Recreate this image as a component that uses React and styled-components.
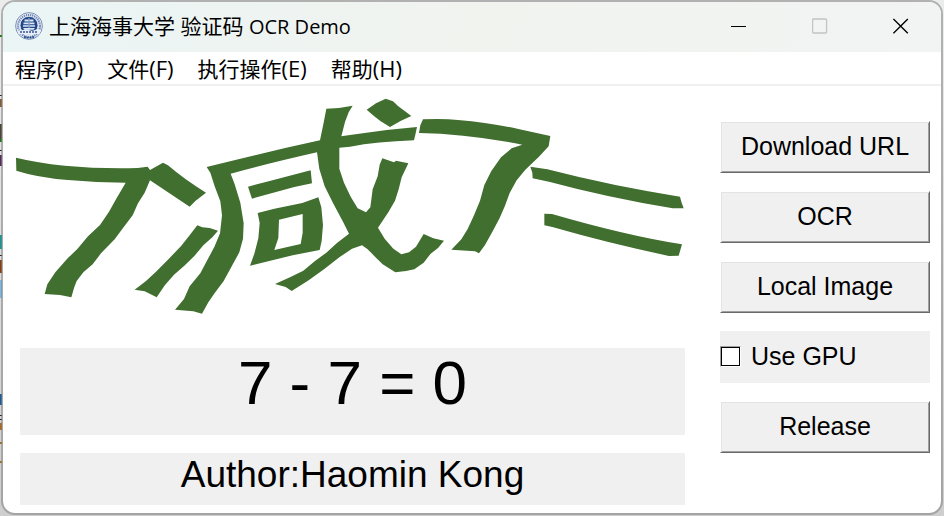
import React from "react";
import styled, { createGlobalStyle } from "styled-components";

const GlobalStyle = createGlobalStyle`
  * { box-sizing: border-box; }
  body { margin: 0; }
  button, input { font: inherit; color: inherit; }
`;

const Desktop = styled.div`
  min-height: 100vh;
  padding: 0 1px 1px;
  background:
    linear-gradient(
      #0000 35px, #0a7d0a 35px 37px, #0000 37px 95px, #222 95px 96px, #0000 96px 99px,
      #8a5a30 99px 107px, #0000 107px 124px, #4d4435 124px 139px, #118011 139px 142px,
      #0000 142px 150px, #222 150px 151px, #0000 151px 155px, #572c5c 155px 166px,
      #0000 166px 235px, #14999b 235px 249px, #0000 249px 255px, #222 255px 256px,
      #0000 256px 260px, #8b3e08 260px 273px, #0000 273px 280px, #79b9e6 280px 298px,
      #0000 298px 394px, #195c99 394px 405px, #0000 405px 415px, #222 415px 416px,
      #0000 416px 419px, #222 419px 420px, #0000 420px 423px, #ae6816 423px 430px,
      #0000 430px 442px, #a46d1d 442px 444px, #0000 444px 461px, #a46d1d 461px 463px,
      #0000 463px
    ) 0 0 / 2px 100% no-repeat,
    linear-gradient(#ececec, #cecece);
`;

const Window = styled.main`
  overflow: hidden;
  border: 2px solid rgba(130, 130, 130, 0.55);
  border-radius: 14px;
  background: #fff;
  background-clip: padding-box;
  color: #000;
  font-family: "Liberation Sans", Arial, sans-serif;
`;

const TitleBar = styled.header`
  display: flex;
  align-items: center;
  height: 50px;
  padding: 0 0 2px 12px;
  background: linear-gradient(100deg, #eaf5f5, #f1f3ef 50%, #f1f4f3);
  font-family: "Open Sans", "Noto Sans CJK SC", sans-serif;
`;

const Title = styled.h1`
  flex: 1;
  margin: 0 0 0 6px;
  font-size: 21px;
  line-height: 30px;
  font-weight: 400;
  white-space: nowrap;
`;

const TitleLatin = styled.span`
  font-size: 20px;
`;

const CaptionButton = styled.button`
  display: grid;
  place-items: center;
  width: 81px;
  height: 48px;
  padding: 0;
  border: 0;
  background: transparent;
  color: ${({ disabled }) => (disabled ? "#c2c4c3" : "#000")};
`;

const MenuBar = styled.nav`
  display: flex;
  gap: 24px;
  height: 34px;
  padding-left: 12px;
  border-bottom: 2px solid #f0f0f0;
  font-family: "Open Sans", "Noto Sans CJK SC", sans-serif;
`;

const MenuItem = styled.button`
  padding: 0;
  border: 0;
  background: transparent;
  font-size: 21px;
  line-height: 32px;
  white-space: nowrap;
`;

const MenuKey = styled.span`
  font-size: 22px;
`;

const Content = styled.div`
  display: grid;
  grid-template-columns: minmax(0, 1fr) 210px;
  gap: 35px;
  padding: 10px 11px 8px 12px;
`;

const Preview = styled.section`
  display: flex;
  flex-direction: column;
`;

const Readout = styled.div`
  height: ${({ $large }) => ($large ? 87 : 52)}px;
  margin: ${({ $large }) => ($large ? 30 : 18)}px 0 0 5px;
  background: #f0f0f0;
  font-size: ${({ $large }) => ($large ? 62 : 37)}px;
  line-height: ${({ $large }) => ($large ? 70 : 44)}px;
  text-align: center;
  white-space: nowrap;
`;

const Actions = styled.aside`
  display: flex;
  flex-direction: column;
  gap: 18px;
  padding-top: 25px;
`;

const ActionButton = styled.button`
  height: 52px;
  padding: 0 0 2px;
  border: 1px solid;
  border-color: #fff #696969 #696969 #fff;
  background: #f0f0f0;
  box-shadow: inset 1px 1px #e3e3e3, inset -1px -1px #a0a0a0;
  font-size: 25px;
  line-height: 28px;
`;

const CheckRow = styled.label`
  display: flex;
  align-items: center;
  gap: 10px;
  height: 52px;
  padding-bottom: 2px;
  background: #f0f0f0;
  font-size: 25px;
  line-height: 28px;
`;

const CheckBox = styled.input`
  appearance: none;
  width: 21px;
  height: 21px;
  margin: 0;
  border: 1px solid;
  border-color: #a0a0a0 #fff #fff #a0a0a0;
  background: #fff;
  box-shadow: inset 1px 1px #000, inset -1px -1px #000;

  &:checked {
    background: #fff linear-gradient(#000, #000) center / 9px 9px no-repeat;
  }
`;

const Drawing = styled.svg`
  display: block;
  width: 100%;
  height: auto;
`;

function Seal() {
  return (
    <svg width="28" height="28" viewBox="0 0 28 28" aria-hidden="true">
      <circle cx="14" cy="14" r="13.4" fill="#e9eef7" stroke="#7d91b5" strokeWidth="1" />
      <circle cx="14" cy="14" r="11" fill="none" stroke="#6f88b6" strokeWidth="2.2" strokeDasharray="1.3 .8" />
      <circle cx="14" cy="13.3" r="9" fill="#204789" stroke="#e9eef7" strokeWidth=".8" />
      <path
        d="M9.5 7.5h4v2h-4zm5 0h4v2h-4zM8.5 10.5h5v1.8h-5zm6 0h5v1.8h-5zM8 13.3h5.5v1.4H8zm6.5 0H20v1.4h-5.5zM8 16h12l-1.5 1.8h-9z"
        fill="#dce6f5"
      />
      <path d="M14 6v12" stroke="#dce6f5" strokeWidth=".7" />
      <path d="M2 18q3 1.5 6 0t6 0 6 0 6 0l-1.5 4h-21z" fill="#e9eef7" />
      <path d="M5 20h18" stroke="#5f7bad" strokeWidth="1.8" strokeDasharray="2 1" />
      <path d="M9 24.8q5 1.8 10 0" fill="none" stroke="#284d8c" strokeWidth="1.8" strokeDasharray="2 .8" />
    </svg>
  );
}

function CaptchaDrawing() {
  return (
    <Drawing viewBox="45 33 2010 666" role="img" aria-label="7减7=">
      <g fill="#416f2f">
        <path d="M48 218Q110 233 194 242Q300 252 413 249L443 245L450 255L489 233L504 241Q555 285 618 323L586 348L569 365L450 286L434 323L414 355L398 391L369 429L344 463L303 505L278 538L250 562L230 588L223 606L214 637L180 630L134 627L142 598L166 562L203 520L232 492L264 454L300 420L327 380L348 343L377 293Q290 293 204 285Q110 277 49 257Z" />
        <path d="M592 421L607 427L629 429L654 437L637 457L610 481L583 513L553 542L522 569L495 600L470 637L434 619L404 614L438 588L468 560L506 522L544 482L570 449Z" />
        <path
          fillRule="evenodd"
          d="M620 246Q790 203 960 166L970 118L979 71L1017 69L1058 62L1046 82L1035 111L1024 154L1050 150Q1150 134 1251 126L1246 149L1242 166Q1130 170 1050 185L1018 188L1018 251L1032 293L1052 335L1073 370L1098 382L1111 367L1118 313L1133 274L1139 239L1147 220L1182 232L1188 227L1225 235L1205 277L1196 313L1185 347L1165 382L1134 428L1154 461L1180 491L1204 508L1227 502L1248 485L1271 447L1300 460L1332 467L1314 489L1292 506L1271 533L1243 553L1218 558L1186 562L1148 538L1125 515L1103 493L1086 481L1056 491L1018 517L974 551L926 586L875 618L857 606L825 597L870 577L910 557L944 529L979 503L1010 475L1047 446L1029 410L999 354L974 304L958 252L951 202Q810 234 692 266L704 298L721 353L731 415L729 461L718 502L696 542L671 588L642 627L625 652L606 686L580 679L525 674L552 642L569 604L601 565L620 529L644 484L660 445L666 391L661 349L644 304L631 263Z"
        />
        <path d="M744 305L806 289L932 256L936 295L883 306L756 341Z" />
        <path
          fillRule="evenodd"
          d="M773 384L823 371L907 354L955 337L964 367L969 420L965 468L959 495L878 511L750 542L763 506L775 460L779 414ZM837 404L835 459L823 495L902 477L908 443L908 387Z"
        />
        <path d="M1100 74L1128 55L1157 41L1179 49L1194 63L1234 93L1203 107L1170 126L1141 108L1121 92Z" />
        <path d="M1269 103Q1330 100 1374 105Q1470 113 1555 132L1651 153L1646 184L1616 216L1576 254L1550 286L1529 324L1515 362L1499 399L1478 439L1455 480L1437 505L1425 499L1354 494L1384 463L1403 432L1422 391L1440 347L1453 300L1474 258L1503 217L1535 190L1567 179Q1400 146 1257 144L1261 121Z" />
        <path d="M1591 245L1642 253Q1840 304 2040 335L2044 350L2051 370L2018 370Q1820 337 1650 291L1598 280L1597 263Z" />
        <path d="M1633 386L1656 387Q1880 452 2046 478L2036 512L2007 513Q1820 473 1657 426L1633 421Z" />
      </g>
    </Drawing>
  );
}

const menus = [
  ["程序", "(P)"],
  ["文件", "(F)"],
  ["执行操作", "(E)"],
  ["帮助", "(H)"],
];

export default function App() {
  return (
    <>
      <GlobalStyle />
      <Desktop>
        <Window>
          <TitleBar>
            <Seal />
            <Title>
              上海海事大学 验证码 <TitleLatin>OCR Demo</TitleLatin>
            </Title>
            <CaptionButton aria-label="Minimize">
              <svg width="16" height="16" viewBox="0 0 16 16">
                <path d="M0 8.5h15" stroke="currentColor" />
              </svg>
            </CaptionButton>
            <CaptionButton aria-label="Maximize" disabled>
              <svg width="16" height="16" viewBox="0 0 16 16">
                <rect x=".6" y="1" width="14" height="14" rx="1" fill="none" stroke="currentColor" strokeWidth="1.3" />
              </svg>
            </CaptionButton>
            <CaptionButton aria-label="Close">
              <svg width="16" height="16" viewBox="0 0 16 16">
                <path d="M.4.9l14.4 14.4M14.8.9L.4 15.3" stroke="currentColor" strokeWidth="1.4" />
              </svg>
            </CaptionButton>
          </TitleBar>
          <MenuBar>
            {menus.map(([label, key]) => (
              <MenuItem key={key}>
                {label}
                <MenuKey>{key}</MenuKey>
              </MenuItem>
            ))}
          </MenuBar>
          <Content>
            <Preview>
              <CaptchaDrawing />
              <Readout $large>7 - 7 = 0</Readout>
              <Readout>Author:Haomin Kong</Readout>
            </Preview>
            <Actions>
              <ActionButton>Download URL</ActionButton>
              <ActionButton>OCR</ActionButton>
              <ActionButton>Local Image</ActionButton>
              <CheckRow>
                <CheckBox type="checkbox" />
                Use GPU
              </CheckRow>
              <ActionButton>Release</ActionButton>
            </Actions>
          </Content>
        </Window>
      </Desktop>
    </>
  );
}
